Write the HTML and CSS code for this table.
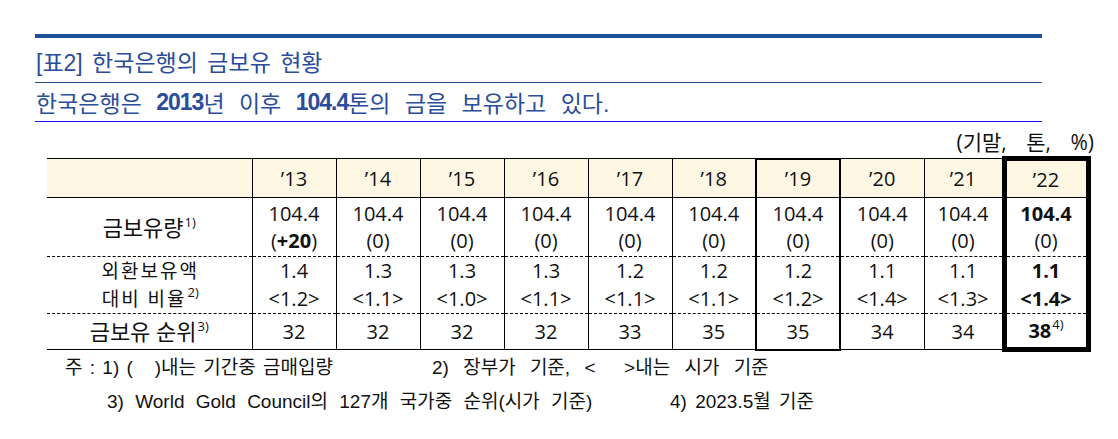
FILE: index.html
```html
<!DOCTYPE html>
<html lang="ko">
<head>
<meta charset="utf-8">
<title>한국은행의 금보유 현황</title>
<link rel="stylesheet" href="styles.css">
</head>
<body>
<div class="page">
  <div class="banner">
    <div class="bar"></div>
    <div class="title">[표2] 한국은행의 금보유 현황</div>
    <div class="subtitle">한국은행은 <b>2013</b>년 이후 <b>104.4</b>톤의 금을 보유하고 있다.</div>
  </div>
  <div class="unit">(기말, 톤, %)</div>
  <table class="gold">
    <colgroup>
      <col class="c-label">
      <col class="c-year"><col class="c-year"><col class="c-year"><col class="c-year"><col class="c-year">
      <col class="c-year"><col class="c-year"><col class="c-year"><col class="c-year21"><col class="c-year">
    </colgroup>
    <thead>
      <tr class="r-head">
        <th class="label"></th>
        <th>’13</th><th>’14</th><th>’15</th><th>’16</th><th>’17</th><th>’18</th>
        <th class="y19">’19</th><th>’20</th><th>’21</th><th class="y22">’22</th>
      </tr>
    </thead>
    <tbody>
      <tr class="r-amount">
        <td class="label">금보유량<sup>1)</sup></td>
        <td>104.4<br>(<b>+20</b>)</td>
        <td>104.4<br>(0)</td>
        <td>104.4<br>(0)</td>
        <td>104.4<br>(0)</td>
        <td>104.4<br>(0)</td>
        <td>104.4<br>(0)</td>
        <td class="y19">104.4<br>(0)</td>
        <td>104.4<br>(0)</td>
        <td>104.4<br>(0)</td>
        <td class="y22"><b>104.4</b><br>(0)</td>
      </tr>
      <tr class="r-ratio dashed">
        <td class="label label-2">외환보유액<br>대비 비율<sup>2)</sup></td>
        <td>1.4<br>&lt;1.2&gt;</td>
        <td>1.3<br>&lt;1.1&gt;</td>
        <td>1.3<br>&lt;1.0&gt;</td>
        <td>1.3<br>&lt;1.1&gt;</td>
        <td>1.2<br>&lt;1.1&gt;</td>
        <td>1.2<br>&lt;1.1&gt;</td>
        <td class="y19">1.2<br>&lt;1.2&gt;</td>
        <td>1.1<br>&lt;1.4&gt;</td>
        <td>1.1<br>&lt;1.3&gt;</td>
        <td class="y22"><b>1.1<br>&lt;1.4&gt;</b></td>
      </tr>
      <tr class="r-rank dashed last">
        <td class="label">금보유 순위<sup>3)</sup></td>
        <td>32</td><td>32</td><td>32</td><td>32</td><td>33</td><td>35</td>
        <td class="y19">35</td><td>34</td><td>34</td>
        <td class="y22"><b>38</b><sup>4)</sup></td>
      </tr>
    </tbody>
  </table>
  <div class="notes">
    <div class="note-line n1"><span class="n-first">주 : 1) (   )내는 기간중 금매입량</span><span class="n-second">2) 장부가 기준, &lt;  &gt;내는 시가 기준</span></div>
    <div class="note-line n2"><span class="n-first">3) World Gold Council의 127개 국가중 순위(시가 기준)</span><span class="n-second">4) 2023.5월 기준</span></div>
  </div>
</div>
</body>
</html>
```
FILE: styles.css
```css
* { box-sizing: border-box; }
html, body { margin: 0; padding: 0; background: #ffffff; }
body {
  width: 1118px;
  height: 439px;
  overflow: hidden;
  font-family: "Open Sans", "Noto Sans CJK KR", sans-serif;
  color: #111;
}
.page {
  display: flex;
  flex-direction: column;
  padding-top: 34px;
}
.banner {
  margin-left: 35px;
  width: 1007px;
  display: flex;
  flex-direction: column;
  font-family: "Liberation Sans", "Noto Sans CJK KR", sans-serif;
  color: #2a4d9c;
}
.bar {
  height: 4px;
  background: #1f4f96;
}
.title {
  height: 45px;
  display: flex;
  align-items: center;
  padding: 2px 0 0 1px;
  font-size: 23px;
  word-spacing: 3px;
  border-bottom: 1px solid #2b4c86;
}
.subtitle {
  height: 39px;
  display: flex;
  align-items: center;
  padding: 0 0 0 1px;
  font-size: 23px;
  word-spacing: 8px;
  border-bottom: 1.5px solid #1010f0;
  white-space: pre;
}
.subtitle b { font-weight: 700; letter-spacing: -1px; }
.unit {
  margin-left: 47px;
  width: 1047px;
  height: 34px;
  display: flex;
  align-items: center;
  justify-content: flex-end;
  padding-top: 3px;
  font-size: 21px;
  word-spacing: 14px;
}
.gold {
  margin-left: 47px;
  width: 1037px;
  table-layout: fixed;
  border-collapse: collapse;
  font-size: 20px;
  line-height: 27px;
  text-align: center;
}
.c-label { width: 205px; }
.c-year { width: 84px; }
.c-year21 { width: 80px; }
.gold th, .gold td {
  padding: 0;
  border-left: 1px solid #000;
  border-right: 1px solid #000;
  vertical-align: middle;
  font-weight: 400;
}
.gold .label {
  border-left: none;
  font-size: 22px;
}
.gold .label-2 {
  font-size: 19px;
  letter-spacing: 2px;
  line-height: 28px;
  padding-left: 2px;
}
.r-head th {
  height: 39px;
  background: #fef7e4;
  border-top: 1px solid #000;
  border-bottom: 1px solid #000;
  font-size: 20px;
}
.r-amount td { height: 59px; }
.r-ratio td { height: 56px; line-height: 28px; }
.r-rank td { height: 36px; }
.dashed td { border-top: 1px dashed #000; }
.last td { border-bottom: 1px solid #000; }
.gold b { font-weight: 700; }
.gold sup {
  font-size: 13px;
  line-height: 0;
  vertical-align: 9px;
  margin-left: 1px;
  letter-spacing: 0;
}
.gold .y19 {
  border-left: 2px solid #000;
  border-right: 2px solid #000;
}
.r-head .y19 { border-top: 2px solid #000; }
.last .y19 { border-bottom: 2px solid #000; }
.gold .y22 {
  border-left: 5px solid #000;
  border-right: 5px solid #000;
}
.r-head .y22 { border-top: 5px solid #000; }
.last .y22 { border-bottom: 5px solid #000; }
.notes {
  display: flex;
  flex-direction: column;
  margin-top: -1px;
  font-family: "Liberation Sans", "Noto Sans CJK KR", sans-serif;
  font-size: 19px;
  line-height: 34px;
  color: #111;
}
.note-line {
  display: flex;
  white-space: pre;
}
.n1 { padding-left: 65px; word-spacing: 2px; }
.n1 .n-first { width: 367px; }
.n1 .n-second { word-spacing: 9px; }
.n2 { padding-left: 107px; word-spacing: 6px; }
.n2 .n-first { width: 563px; }
.n2 .n-second { word-spacing: 3px; }
```
